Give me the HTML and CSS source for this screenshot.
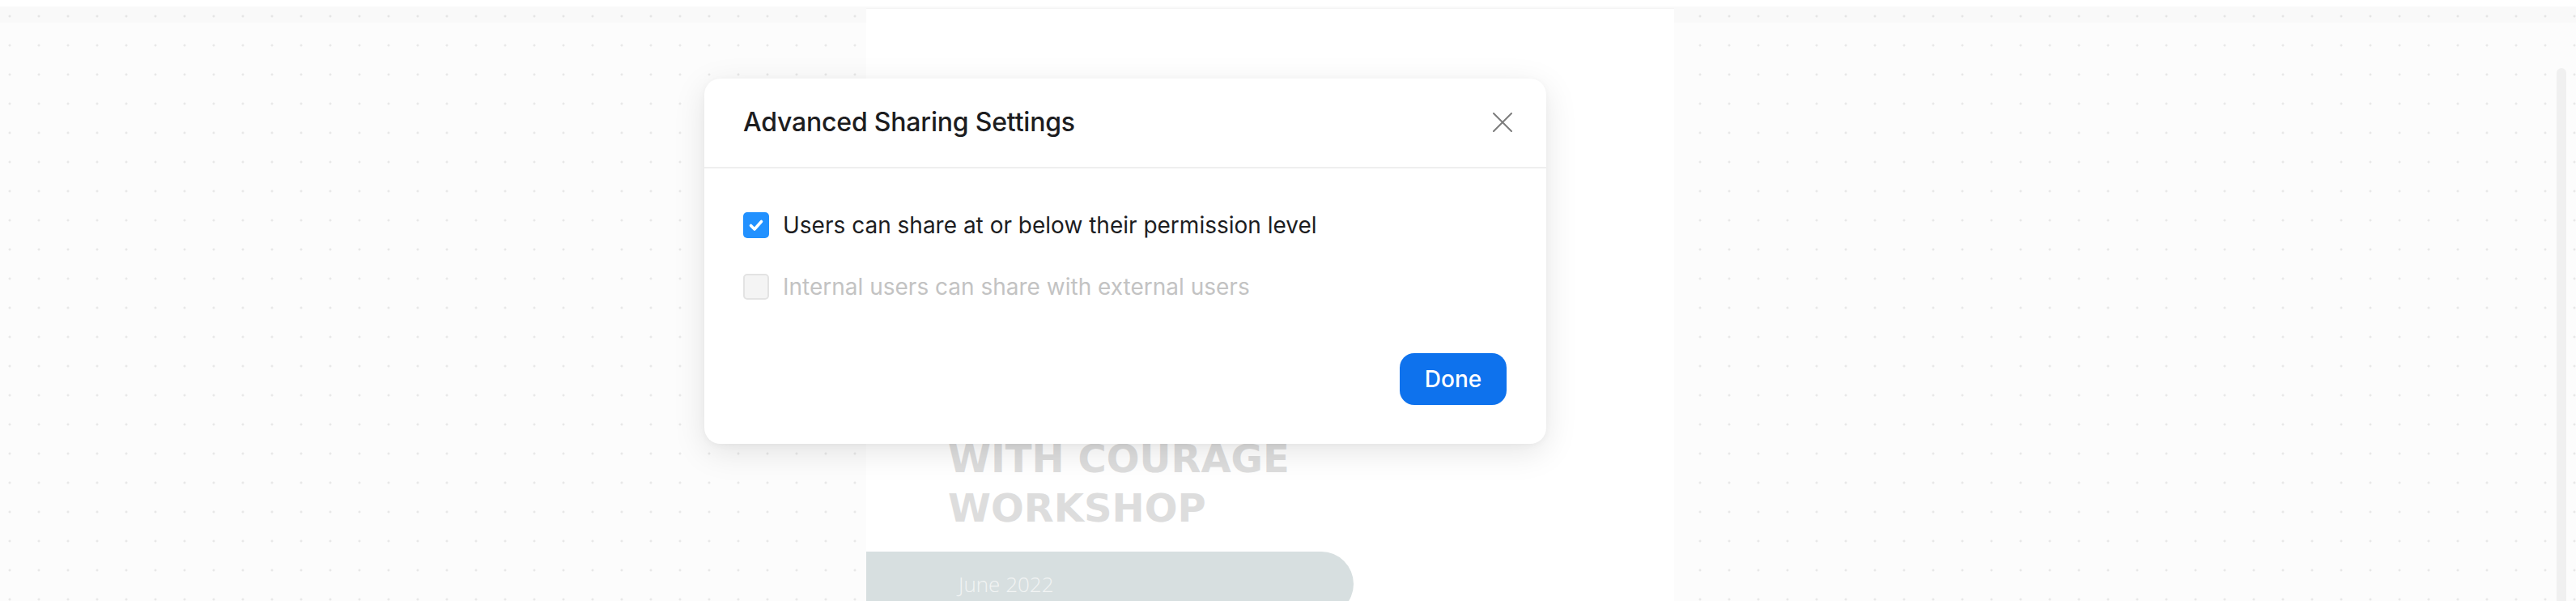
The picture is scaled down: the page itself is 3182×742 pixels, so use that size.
FILE: index.html
```html
<!DOCTYPE html>
<html lang="en">
<head>
<meta charset="utf-8">
<title>Advanced Sharing Settings</title>
<link rel="stylesheet" href="styles.css">
</head>
<body>
<div class="app">
  <div class="topbar"></div>
  <div class="workspace">
    <div class="canvas-gap"></div>
    <div class="page">
      <h1 class="page-title">WITH COURAGE<br>WORKSHOP</h1>
      <div class="date-pill"><span>June 2022</span></div>
    </div>
    <div class="canvas-fill"></div>
    <div class="scrollbar"></div>
    <div class="canvas-edge"></div>
  </div>
</div>

<div class="modal" role="dialog" aria-labelledby="modal-title">
  <div class="modal-header">
    <h2 id="modal-title" class="modal-title">Advanced Sharing Settings</h2>
    <button class="close-btn" aria-label="Close">
      <svg width="24" height="24" viewBox="0 0 24 24"><path d="M1 1 L23 23 M23 1 L1 23" stroke="#7c7c7c" stroke-width="2" fill="none" stroke-linecap="round"/></svg>
    </button>
  </div>
  <div class="modal-body">
    <label class="option">
      <span class="check check-on">
        <svg width="32" height="32" viewBox="0 0 32 32"><path d="M9.5 16.5 L14 21 L22.5 11.5" stroke="#fff" stroke-width="3.6" fill="none" stroke-linecap="round" stroke-linejoin="round"/></svg>
      </span>
      <span class="option-label">Users can share at or below their permission level</span>
    </label>
    <label class="option option-disabled">
      <span class="check check-off"></span>
      <span class="option-label">Internal users can share with external users</span>
    </label>
  </div>
  <div class="modal-footer">
    <button class="done-btn">Done</button>
  </div>
</div>
</body>
</html>
```

FILE: styles.css
```css
* { box-sizing: border-box; }

html, body {
  margin: 0;
  height: 742px;
  overflow: hidden;
}

body {
  font-family: "Inter", "Noto Sans", sans-serif;
  background-color: #fcfcfc;
  background-image: radial-gradient(circle, #e8e8e8 1.2px, transparent 1.8px);
  background-size: 36px 36px;
  background-position: -6px 2px;
}

.app {
  display: flex;
  flex-direction: column;
  height: 742px;
}

.topbar {
  height: 28px;
  border-top: 8px solid #ffffff;
  background: rgba(0, 0, 0, 0.012);
  flex: none;
}

.workspace {
  flex: 1;
  display: flex;
  margin-top: -18px;
}

.canvas-gap { width: 1070px; flex: none; }

.page {
  width: 998px;
  flex: none;
  background: #ffffff;
  border-top: 1px solid #f4f4f4;
  padding-top: 525px;
}

.page-title {
  margin: 0 0 23px 101px;
  font-family: "DejaVu Sans", sans-serif;
  font-weight: 700;
  font-size: 48px;
  line-height: 61px;
  color: #dddddd;
  letter-spacing: 0;
}

.date-pill {
  width: 602px;
  height: 80px;
  background: #d7dfe0;
  border-radius: 0 40px 40px 0;
  display: flex;
  align-items: center;
  padding-left: 114px;
}

.date-pill span {
  font-family: "Open Sans", sans-serif;
  font-weight: 300;
  font-size: 26px;
  color: #f2f4f4;
}

.canvas-fill { flex: 1; }

.scrollbar {
  width: 12px;
  flex: none;
  margin-top: 74px;
  background: #f0f0f0;
  border-radius: 6px 6px 0 0;
}

.canvas-edge { width: 12px; flex: none; }

/* Modal */
.modal {
  position: absolute;
  left: 870px;
  top: 97px;
  width: 1040px;
  height: 451px;
  background: #ffffff;
  border-radius: 20px;
  box-shadow: 0 10px 40px rgba(0, 0, 0, 0.10), 0 2px 8px rgba(0, 0, 0, 0.04);
  display: flex;
  flex-direction: column;
}

.modal-header {
  height: 111px;
  flex: none;
  display: flex;
  align-items: center;
  justify-content: space-between;
  padding: 0 42px 2px 48px;
  border-bottom: 2px solid #efefef;
}

.modal-title {
  margin: 0;
  font-size: 32px;
  font-weight: 500;
  color: #1d1d1f;
  letter-spacing: -0.2px;
}

.close-btn {
  border: 0;
  background: none;
  padding: 0;
  width: 24px;
  height: 24px;
  display: flex;
}

.modal-body {
  padding: 48px 48px 0 48px;
  display: flex;
  flex-direction: column;
  gap: 32px;
}

.option {
  height: 44px;
  display: flex;
  align-items: center;
  gap: 17px;
}

.check {
  width: 32px;
  height: 32px;
  border-radius: 5px;
  flex: none;
  display: flex;
}

.check-on { background: #2291ff; }

.check-off {
  background: #f4f4f4;
  border: 2px solid #e3e3e3;
}

.option-label {
  font-size: 28px;
  color: #1d1d1f;
}

.option-disabled .option-label { color: #c3c3c3; }

.modal-footer {
  margin-top: auto;
  padding: 0 49px 48px 48px;
  display: flex;
  justify-content: flex-end;
}

.done-btn {
  width: 132px;
  height: 64px;
  border: 0;
  border-radius: 18px;
  background: #0e72ed;
  color: #ffffff;
  font-family: "Inter", sans-serif;
  font-size: 28px;
  font-weight: 500;
}
```
